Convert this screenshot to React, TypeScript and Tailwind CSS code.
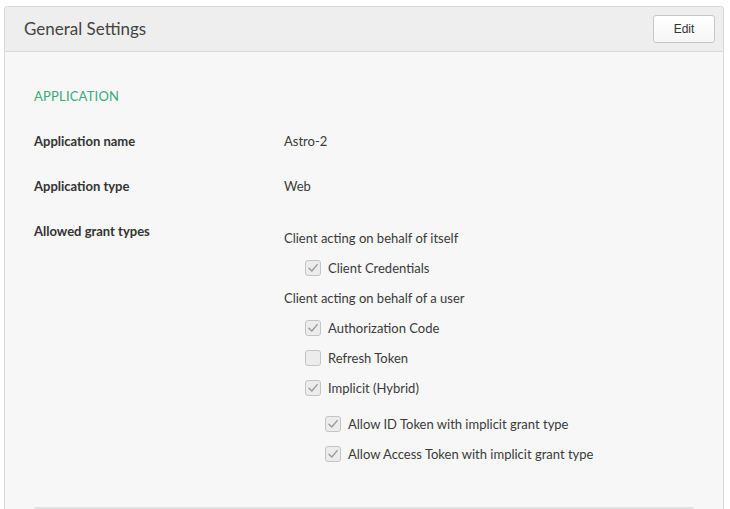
const Check = ({ checked }: { checked: boolean }) => (
  <span className="flex h-[16px] w-[16px] shrink-0 items-center justify-center rounded-[3px] border border-[#c4c4c4] bg-[#ececec]">
    {checked && (
      <svg width="12" height="12" viewBox="0 0 12 12" fill="none">
        <path d="M2 6.2 L4.8 9 L10.2 2.6" stroke="#9a9a9a" strokeWidth="1.4" strokeLinecap="round" strokeLinejoin="round" />
      </svg>
    )}
  </span>
);

const Option = ({ label, checked, nested }: { label: string; checked: boolean; nested?: boolean }) => (
  <div className={`flex h-[30px] items-center gap-[7px] ${nested ? 'pl-[41px]' : 'pl-[21px]'}`}>
    <Check checked={checked} />
    <span>{label}</span>
  </div>
);

export default function App() {
  return (
    <main className="h-[509px] overflow-hidden bg-white pl-[4px] pt-[6px] font-['Lato','Open_Sans',sans-serif] text-[13px] text-[#3a3a3a]">
      <section className="w-[720px] rounded-t-[4px] border border-b-0 border-[#d8d8d8] bg-[#f7f7f7]">
        <header className="flex h-[45px] items-center justify-between rounded-t-[4px] border-b border-[#d8d8d8] bg-[#eeeeee] pl-[19px] pr-[8px]">
          <h1 className="text-[17px] text-[#444]">General Settings</h1>
          <button className="h-[28px] w-[62px] rounded-[3px] border border-[#c6c6c6] bg-gradient-to-b from-white to-[#f6f6f6] font-['Liberation_Sans',sans-serif] text-[12px] text-[#333]">
            Edit
          </button>
        </header>

        <div className="px-[29px] pt-[36px]">
          <h2 className="text-[13px] leading-[16px] tracking-[0.2px] text-[#3aa97c]">APPLICATION</h2>

          <dl className="mt-[27px] grid grid-cols-[250px_1fr] leading-[20px]">
            <dt className="h-[45px] font-bold text-[#333]">Application name</dt>
            <dd>Astro-2</dd>
            <dt className="h-[45px] font-bold text-[#333]">Application type</dt>
            <dd>Web</dd>
            <dt className="font-bold text-[#333]">Allowed grant types</dt>
            <dd className="mt-[2px]">
              <div className="flex h-[30px] items-center">Client acting on behalf of itself</div>
              <Option label="Client Credentials" checked />
              <div className="flex h-[30px] items-center">Client acting on behalf of a user</div>
              <Option label="Authorization Code" checked />
              <Option label="Refresh Token" checked={false} />
              <Option label="Implicit (Hybrid)" checked />
              <div className="mt-[6px]">
                <Option label="Allow ID Token with implicit grant type" checked nested />
                <Option label="Allow Access Token with implicit grant type" checked nested />
              </div>
            </dd>
          </dl>

          <div className="mt-[38px] border-t-2 border-[#e2e2e2]" />
        </div>
      </section>
    </main>
  );
}
